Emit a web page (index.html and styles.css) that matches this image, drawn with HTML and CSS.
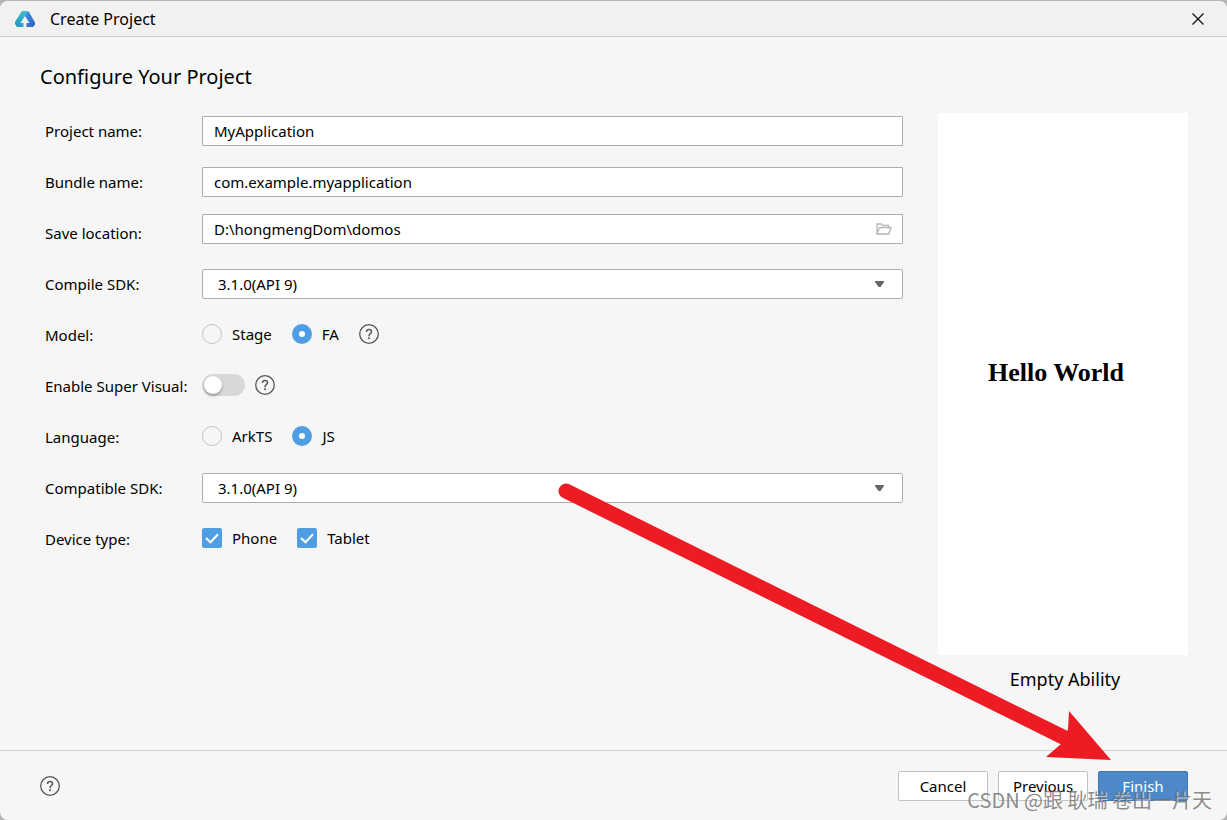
FILE: index.html
```html
<!DOCTYPE html>
<html lang="en">
<head>
<meta charset="utf-8">
<meta name="viewport" content="width=device-width, initial-scale=1">
<title>Create Project</title>
<link rel="stylesheet" href="styles.css">
</head>
<body>
<svg class="sprite" aria-hidden="true">
  <symbol id="help" viewBox="0 0 20 20">
    <circle cx="10" cy="10" r="9.3" fill="none" stroke="#555" stroke-width="1.3"/>
    <path d="M7.5 8V7.700Q7.600 5.500 10 5.500Q12.500 5.500 12.500 7.600Q12.500 8.800 11.300 9.600Q10 10.500 10 12.200" fill="none" stroke="#555" stroke-width="1.5"/>
    <rect x="9.200" y="13.300" width="1.700" height="1.800" fill="#555"/>
  </symbol>
</svg>
<div class="window">
  <header class="titlebar">
    <svg class="logo" viewBox="0 0 20 16" aria-hidden="true">
      <defs>
        <linearGradient id="teal" x1="0" y1="1" x2="1" y2="0"><stop offset="0" stop-color="#1d93bd"/><stop offset="1" stop-color="#3fc8d6"/></linearGradient>
        <linearGradient id="blue" x1="0" y1="0" x2="1" y2="1"><stop offset="0" stop-color="#3f8fe0"/><stop offset="1" stop-color="#2f5fc4"/></linearGradient>
      </defs>
      <path d="M7 0H12.500L13 1L10 5L5.500 12H8.500V16H2L0 13V11Z" fill="url(#teal)"/>
      <path d="M10 5L12.800 .3L14 1L20 11.500V13.500L18 16H11.500V12H14.500Z" fill="url(#blue)"/>
    </svg>
    <span class="titlebar-text">Create Project</span>
    <button class="icon-button" type="button" aria-label="Close">
      <svg width="12" height="12" viewBox="0 0 12 12"><path d="M.5 .5L11.500 11.500M11.500 .5L.5 11.500" stroke="#111" stroke-width="1.3"/></svg>
    </button>
  </header>

  <main class="content">
    <h1 class="heading">Configure Your Project</h1>
    <div class="columns">
      <form class="form" id="project">
        <div class="row">
          <label class="label" for="name">Project name:</label>
          <div class="field"><input class="box" id="name" type="text" value="MyApplication"></div>
        </div>
        <div class="row">
          <label class="label" for="bundle">Bundle name:</label>
          <div class="field"><input class="box" id="bundle" type="text" value="com.example.myapplication"></div>
        </div>
        <div class="row">
          <label class="label" for="location">Save location:</label>
          <div class="field field-path">
            <input class="box" id="location" type="text" value="D:\hongmengDom\domos">
            <button class="icon-button browse" type="button" aria-label="Browse">
              <svg width="16" height="12" viewBox="0 0 16 12" fill="none" stroke="#b4b4b4" stroke-width="1.300"><path d="M1 11V1H5.500L7 2.500H12.500V4.500M1 11L3.500 4.700H15L12.700 11Z"/></svg>
            </button>
          </div>
        </div>
        <div class="row">
          <label class="label" for="compile">Compile SDK:</label>
          <div class="field">
            <select class="box select" id="compile"><option>3.1.0(API 9)</option></select>
            <svg class="caret" viewBox="0 0 9 6" aria-hidden="true"><path d="M0 0H9V1L5.500 6H3.500L0 1Z" fill="#666"/></svg>
          </div>
        </div>
        <div class="row" role="group" aria-labelledby="model">
          <span class="label" id="model">Model:</span>
          <div class="options">
            <label class="option"><input class="radio" type="radio" name="model">Stage</label>
            <label class="option"><input class="radio" type="radio" name="model" checked>FA</label>
            <button class="icon-button" type="button" aria-label="About models"><svg class="help"><use href="#help"/></svg></button>
          </div>
        </div>
        <div class="row">
          <label class="label" for="visual">Enable Super Visual:</label>
          <div class="options options-tight">
            <input class="switch" id="visual" type="checkbox" role="switch">
            <button class="icon-button" type="button" aria-label="About Super Visual"><svg class="help"><use href="#help"/></svg></button>
          </div>
        </div>
        <div class="row" role="group" aria-labelledby="language">
          <span class="label" id="language">Language:</span>
          <div class="options">
            <label class="option"><input class="radio" type="radio" name="language">ArkTS</label>
            <label class="option"><input class="radio" type="radio" name="language" checked>JS</label>
          </div>
        </div>
        <div class="row">
          <label class="label" for="compatible">Compatible SDK:</label>
          <div class="field">
            <select class="box select" id="compatible"><option>3.1.0(API 9)</option></select>
            <svg class="caret" viewBox="0 0 9 6" aria-hidden="true"><path d="M0 0H9V1L5.500 6H3.500L0 1Z" fill="#666"/></svg>
          </div>
        </div>
        <div class="row" role="group" aria-labelledby="device">
          <span class="label" id="device">Device type:</span>
          <div class="options">
            <label class="option"><span class="check"><input class="checkbox" type="checkbox" checked><svg class="tick" viewBox="0 0 20 20"><path d="M4 10L8.500 14.300L16 6.300" fill="none" stroke="#fff" stroke-width="2"/></svg></span>Phone</label>
            <label class="option"><span class="check"><input class="checkbox" type="checkbox" checked><svg class="tick" viewBox="0 0 20 20"><path d="M4 10L8.500 14.300L16 6.300" fill="none" stroke="#fff" stroke-width="2"/></svg></span>Tablet</label>
          </div>
        </div>
      </form>
      <figure class="preview">
        <div class="screen">Hello World</div>
        <figcaption class="caption">Empty Ability</figcaption>
      </figure>
    </div>
  </main>

  <footer class="footer">
    <button class="icon-button" type="button" aria-label="Help"><svg class="help"><use href="#help"/></svg></button>
    <div class="actions">
      <button class="button" type="button">Cancel</button>
      <button class="button" type="button">Previous</button>
      <button class="button primary" type="submit" form="project">Finish</button>
    </div>
  </footer>

  <svg class="arrow" viewBox="0 0 554 278" aria-hidden="true">
    <path d="M9 8L510 256" stroke="#ed1c24" stroke-width="15" stroke-linecap="round"/>
    <path d="M554 277L512 228L511 246L504 261L489 274Z" fill="#ed1c24"/>
  </svg>
  <div class="watermark">CSDN @跟 耿瑞 卷出一片天</div>
</div>
</body>
</html>
```
FILE: styles.css
```css
* { box-sizing: border-box; }

body {
  margin: 0;
  padding-top: 1px;
  min-height: 100vh;
  display: flex;
  background: #b4b4b4;
  color: #000;
  font: 15px/20px "Noto Sans", "Open Sans", sans-serif;
}

button, input, select { font: inherit; color: inherit; }

.sprite { position: absolute; width: 0; height: 0; }

.window {
  position: relative;
  flex: 1;
  display: flex;
  flex-direction: column;
  overflow: hidden;
  border-radius: 8px;
  background: #f6f6f6;
}

.titlebar {
  display: flex;
  align-items: center;
  height: 36px;
  padding: 0 23px 0 15px;
  border-bottom: 1px solid #cfcfcf;
  background: #f1f1f1;
}

.logo { width: 20px; height: 16px; }
.titlebar-text { flex: 1; margin-left: 15px; font-size: 16px; }

.icon-button {
  display: flex;
  padding: 0;
  border: 0;
  background: none;
}

.help { width: 20px; height: 20px; }

.content { flex: 1; padding: 24px 39px 0 40px; }

.heading {
  margin: 0;
  font-size: 20px;
  line-height: 32px;
  font-weight: 400;
}

.columns {
  display: grid;
  grid-template-columns: 1fr 250px;
  gap: 35px;
  padding-top: 12px;
}

.form { padding-left: 5px; }

.row {
  display: grid;
  grid-template-columns: 157px 1fr;
  align-items: center;
  height: 51px;
}

.field { position: relative; display: flex; }
.field-path { padding-bottom: 8px; }

.box {
  width: 100%;
  height: 30px;
  padding: 0 11px;
  border: 1px solid #adadad;
  border-radius: 1px;
  background: #fff;
}

.select { appearance: none; padding: 0 15px; border-radius: 2px; }
.browse { position: absolute; top: 9px; right: 11px; }
.caret { position: absolute; top: 12px; right: 19px; width: 9px; height: 6px; }

.options { display: flex; align-items: center; gap: 20px; padding-bottom: 2px; }
.options-tight { gap: 10px; }
.option { display: flex; align-items: center; gap: 10px; }

.radio {
  appearance: none;
  width: 20px;
  height: 20px;
  margin: 0;
  border: 1px solid #c4c4c4;
  border-radius: 50%;
}

.radio:checked { border: 7px solid #4f9ee3; background: #fff; }

.switch {
  appearance: none;
  width: 43px;
  height: 22px;
  margin: 0;
  padding: 2px;
  border-radius: 11px;
  background: #d8d8d8;
}

.switch::before {
  content: "";
  display: block;
  width: 18px;
  height: 18px;
  border-radius: 50%;
  background: #fff;
  box-shadow: 0 2px 3px rgba(0, 0, 0, .3);
}

.check { display: grid; }
.checkbox, .tick { grid-area: 1 / 1; width: 20px; height: 20px; }
.checkbox { appearance: none; margin: 0; border: 1px solid #c4c4c4; border-radius: 2px; }
.checkbox:checked { border-color: #4f9ee3; background: #4f9ee3; }
.tick { z-index: 1; pointer-events: none; }

.preview { margin: 8px 0 0; }

.screen {
  display: flex;
  align-items: center;
  height: 542px;
  padding: 0 50px 22px;
  background: #fff;
  font: bold 26px/30px "Liberation Serif", serif;
  white-space: nowrap;
}

.caption {
  padding: 12px 0 0 4px;
  font-size: 18px;
  line-height: 24px;
  text-align: center;
}

.footer {
  display: flex;
  align-items: center;
  justify-content: space-between;
  height: 70px;
  padding: 0 39px 0 40px;
  border-top: 1px solid #cfcfcf;
}

.actions { display: flex; gap: 10px; }

.button {
  width: 90px;
  height: 30px;
  padding: 0;
  border: 1px solid #c2c2c2;
  border-radius: 2px;
  background: #fff;
}

.primary { border-color: #4478b5; background: #4d89c9; color: #fff; }

.arrow {
  position: absolute;
  top: 482px;
  left: 557px;
  width: 554px;
  height: 278px;
  pointer-events: none;
}

.watermark {
  position: absolute;
  right: 15px;
  bottom: 5px;
  color: rgba(110, 110, 110, .8);
  font: 20px/30px "Noto Sans CJK SC", sans-serif;
  text-shadow: 1px 1px 0 rgba(255, 255, 255, .6);
  white-space: nowrap;
  pointer-events: none;
}
```
